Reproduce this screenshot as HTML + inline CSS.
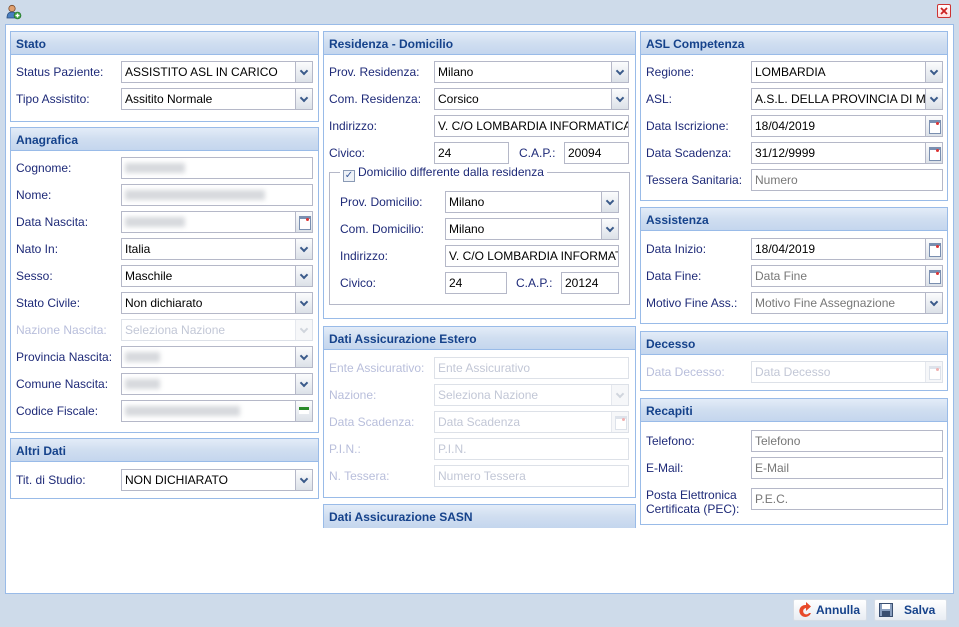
<!DOCTYPE html>
<html><head><meta charset="utf-8"><style>
*{box-sizing:border-box;margin:0;padding:0}
body{width:959px;height:627px;overflow:hidden;background:#cedbea;font-family:"Liberation Sans","DejaVu Sans",sans-serif;font-size:12px;position:relative}
.a{position:absolute}
.win{left:5px;top:24px;width:949px;height:570px;background:#fff;border:1px solid #99bbe8}
.p{position:absolute;border:1px solid #99bbe8;background:#fff}
.h{height:23px;background:linear-gradient(#e3ecf8,#d0def0 50%,#c4d6ee);border-bottom:1px solid #99bbe8;font-weight:bold;color:#15428b;padding-left:5px;line-height:24px}
.l{position:absolute;color:#1e2a78;white-space:nowrap;line-height:14px}
.f{position:absolute;height:22px;border:1px solid #b5b8c8;background:#fff;padding:0 3px;line-height:20px;white-space:nowrap;overflow:hidden;color:#000}
.ph{color:#777}
.dis{color:#c2c7d6;border-color:#dde1e8}
.dl{color:#b8bedb}
.t{position:absolute;right:0;top:0;width:17px;height:20px;background:linear-gradient(#fbfcfd,#dce1e8);border-left:1px solid #b5b8c8}
.t:after{content:"";position:absolute;left:5px;top:6px;width:4px;height:4px;border-right:2px solid #3a5a8a;border-bottom:2px solid #3a5a8a;transform:rotate(45deg)}
.t2{position:absolute;right:0;top:0;width:17px;height:20px;background:linear-gradient(#fbfcfd,#dce1e8);border-left:1px solid #b5b8c8}
.dis .t{border-left-color:#e5e8ee;background:#f6f7f9}
.dis .t:after{border-color:#d0d5dd}
.c{position:absolute;right:0;top:0;width:17px;height:20px;background:linear-gradient(#fbfcfd,#dce1e8);border-left:1px solid #b5b8c8}
.c:after{content:"";position:absolute;left:3px;top:4px;width:10px;height:10px;border:1px solid #7a8fb0;border-top:3px solid #7a8fb0;background:#fff}
.c:before{content:"";position:absolute;left:10px;top:6px;width:3px;height:3px;border-radius:2px;background:#d33;z-index:2}
.dis .c{border-left-color:#e5e8ee;background:#f6f7f9}
.dis .c:after{border-color:#dde2ea}
.dis .c:before{background:#f0b0b0}
.bl{display:inline-block;margin-top:5px;height:10px;background:#9aa0aa;filter:blur(2.5px);opacity:.4}
.btn{position:absolute;top:599px;height:22px;border:1px solid #d6dde6;border-radius:2px;background:linear-gradient(#fff,#e8edf3);font-weight:bold;color:#15428b;line-height:20px}
</style></head><body>
<svg class="a" style="left:6px;top:4px" width="16" height="16" viewBox="0 0 16 16"><circle cx="6" cy="4.5" r="3.2" fill="#e0a070" stroke="#7a4a2a" stroke-width=".8"/><path d="M1 14c0-4 2-6 5-6s5 2 5 6z" fill="#4a7fc0" stroke="#2a4f80" stroke-width=".8"/><circle cx="11.5" cy="11.5" r="3.5" fill="#3aa040" stroke="#1f6a25" stroke-width=".6"/><path d="M11.5 9.5v4M9.5 11.5h4" stroke="#fff" stroke-width="1.4"/></svg>
<div class="a" style="left:937px;top:4px;width:14px;height:14px;border:1px solid #c33;background:linear-gradient(#fff,#fdd);border-radius:2px"><svg width="12" height="12" viewBox="0 0 12 12"><path d="M3 3l6 6M9 3l-6 6" stroke="#c22" stroke-width="1.8"/></svg></div>
<div class="a win"></div>

<!-- col1 -->
<div class="p" style="left:10px;top:31px;width:309px;height:91px"><div class="h">Stato</div></div>
<div class="l" style="left:16px;top:65px">Status Paziente:</div><div class="f" style="left:121px;top:61px;width:192px">ASSISTITO ASL IN CARICO<div class="t"></div></div>
<div class="l" style="left:16px;top:92px">Tipo Assistito:</div><div class="f" style="left:121px;top:88px;width:192px">Assitito Normale<div class="t"></div></div>

<div class="p" style="left:10px;top:127px;width:309px;height:306px"><div class="h">Anagrafica</div></div>
<div class="l" style="left:16px;top:161px">Cognome:</div><div class="f" style="left:121px;top:157px;width:192px"><span class="bl" style="width:60px"></span></div>
<div class="l" style="left:16px;top:188px">Nome:</div><div class="f" style="left:121px;top:184px;width:192px"><span class="bl" style="width:140px"></span></div>
<div class="l" style="left:16px;top:215px">Data Nascita:</div><div class="f" style="left:121px;top:211px;width:192px"><span class="bl" style="width:60px"></span><div class="c"></div></div>
<div class="l" style="left:16px;top:242px">Nato In:</div><div class="f" style="left:121px;top:238px;width:192px">Italia<div class="t"></div></div>
<div class="l" style="left:16px;top:269px">Sesso:</div><div class="f" style="left:121px;top:265px;width:192px">Maschile<div class="t"></div></div>
<div class="l" style="left:16px;top:296px">Stato Civile:</div><div class="f" style="left:121px;top:292px;width:192px">Non dichiarato<div class="t"></div></div>
<div class="l dl" style="left:16px;top:323px">Nazione Nascita:</div><div class="f dis" style="left:121px;top:319px;width:192px">Seleziona Nazione<div class="t"></div></div>
<div class="l" style="left:16px;top:350px">Provincia Nascita:</div><div class="f" style="left:121px;top:346px;width:192px"><span class="bl" style="width:35px"></span><div class="t"></div></div>
<div class="l" style="left:16px;top:377px">Comune Nascita:</div><div class="f" style="left:121px;top:373px;width:192px"><span class="bl" style="width:35px"></span><div class="t"></div></div>
<div class="l" style="left:16px;top:404px">Codice Fiscale:</div><div class="f" style="left:121px;top:400px;width:192px"><span class="bl" style="width:115px"></span><div class="t2"><span class="a" style="left:3px;top:6px;width:10px;height:7px;background:#fff;border-top:3px solid #2a8a2a"></span></div></div>

<div class="p" style="left:10px;top:438px;width:309px;height:61px"><div class="h">Altri Dati</div></div>
<div class="l" style="left:16px;top:473px">Tit. di Studio:</div><div class="f" style="left:121px;top:469px;width:192px">NON DICHIARATO<div class="t"></div></div>

<!-- col2 -->
<div class="p" style="left:323px;top:31px;width:313px;height:288px"><div class="h">Residenza - Domicilio</div></div>
<div class="l" style="left:329px;top:65px">Prov. Residenza:</div><div class="f" style="left:434px;top:61px;width:195px">Milano<div class="t"></div></div>
<div class="l" style="left:329px;top:92px">Com. Residenza:</div><div class="f" style="left:434px;top:88px;width:195px">Corsico<div class="t"></div></div>
<div class="l" style="left:329px;top:119px">Indirizzo:</div><div class="f" style="left:434px;top:115px;width:195px">V. C/O LOMBARDIA INFORMATICA</div>
<div class="l" style="left:329px;top:146px">Civico:</div><div class="f" style="left:434px;top:142px;width:75px">24</div>
<div class="l" style="left:519px;top:146px">C.A.P.:</div><div class="f" style="left:564px;top:142px;width:65px">20094</div>
<div class="a" style="left:329px;top:172px;width:301px;height:133px;border:1px solid #b5b8c8"></div>
<div class="a" style="left:340px;top:165px;background:#fff;padding:0 3px;color:#1e2a78;line-height:14px"><span style="display:inline-block;width:12px;height:12px;border:1px solid #8a9ab5;background:#eef2f7;vertical-align:-2px;margin-right:3px;color:#3a5a9a;font-size:10px;line-height:10px;text-align:center">✓</span>Domicilio differente dalla residenza</div>
<div class="l" style="left:340px;top:195px">Prov. Domicilio:</div><div class="f" style="left:445px;top:191px;width:174px">Milano<div class="t"></div></div>
<div class="l" style="left:340px;top:222px">Com. Domicilio:</div><div class="f" style="left:445px;top:218px;width:174px">Milano<div class="t"></div></div>
<div class="l" style="left:340px;top:249px">Indirizzo:</div><div class="f" style="left:445px;top:245px;width:174px">V. C/O LOMBARDIA INFORMAT</div>
<div class="l" style="left:340px;top:276px">Civico:</div><div class="f" style="left:445px;top:272px;width:62px">24</div>
<div class="l" style="left:516px;top:276px">C.A.P.:</div><div class="f" style="left:561px;top:272px;width:58px">20124</div>

<div class="p" style="left:323px;top:326px;width:313px;height:172px"><div class="h">Dati Assicurazione Estero</div></div>
<div class="l dl" style="left:329px;top:361px">Ente Assicurativo:</div><div class="f dis" style="left:434px;top:357px;width:195px">Ente Assicurativo</div>
<div class="l dl" style="left:329px;top:388px">Nazione:</div><div class="f dis" style="left:434px;top:384px;width:195px">Seleziona Nazione<div class="t"></div></div>
<div class="l dl" style="left:329px;top:415px">Data Scadenza:</div><div class="f dis" style="left:434px;top:411px;width:195px">Data Scadenza<div class="c"></div></div>
<div class="l dl" style="left:329px;top:442px">P.I.N.:</div><div class="f dis" style="left:434px;top:438px;width:195px">P.I.N.</div>
<div class="l dl" style="left:329px;top:469px">N. Tessera:</div><div class="f dis" style="left:434px;top:465px;width:195px">Numero Tessera</div>

<div class="p" style="left:323px;top:504px;width:313px;height:24px"><div class="h" style="border-bottom:0">Dati Assicurazione SASN</div></div>

<!-- col3 -->
<div class="p" style="left:640px;top:31px;width:308px;height:170px"><div class="h">ASL Competenza</div></div>
<div class="l" style="left:646px;top:65px">Regione:</div><div class="f" style="left:751px;top:61px;width:192px">LOMBARDIA<div class="t"></div></div>
<div class="l" style="left:646px;top:92px">ASL:</div><div class="f" style="left:751px;top:88px;width:192px">A.S.L. DELLA PROVINCIA DI MI<div class="t"></div></div>
<div class="l" style="left:646px;top:119px">Data Iscrizione:</div><div class="f" style="left:751px;top:115px;width:192px">18/04/2019<div class="c"></div></div>
<div class="l" style="left:646px;top:146px">Data Scadenza:</div><div class="f" style="left:751px;top:142px;width:192px">31/12/9999<div class="c"></div></div>
<div class="l" style="left:646px;top:173px">Tessera Sanitaria:</div><div class="f ph" style="left:751px;top:169px;width:192px">Numero</div>

<div class="p" style="left:640px;top:207px;width:308px;height:117px"><div class="h">Assistenza</div></div>
<div class="l" style="left:646px;top:242px">Data Inizio:</div><div class="f" style="left:751px;top:238px;width:192px">18/04/2019<div class="c"></div></div>
<div class="l" style="left:646px;top:269px">Data Fine:</div><div class="f ph" style="left:751px;top:265px;width:192px">Data Fine<div class="c"></div></div>
<div class="l" style="left:646px;top:296px">Motivo Fine Ass.:</div><div class="f ph" style="left:751px;top:292px;width:192px">Motivo Fine Assegnazione<div class="t"></div></div>

<div class="p" style="left:640px;top:331px;width:308px;height:60px"><div class="h">Decesso</div></div>
<div class="l dl" style="left:646px;top:365px">Data Decesso:</div><div class="f dis" style="left:751px;top:361px;width:192px">Data Decesso<div class="c"></div></div>

<div class="p" style="left:640px;top:398px;width:308px;height:127px"><div class="h">Recapiti</div></div>
<div class="l" style="left:646px;top:434px">Telefono:</div><div class="f ph" style="left:751px;top:430px;width:192px">Telefono</div>
<div class="l" style="left:646px;top:461px">E-Mail:</div><div class="f ph" style="left:751px;top:457px;width:192px">E-Mail</div>
<div class="l" style="left:646px;top:488px">Posta Elettronica<br>Certificata (PEC):</div><div class="f ph" style="left:751px;top:488px;width:192px">P.E.C.</div>

<!-- buttons -->
<div class="btn" style="left:793px;width:74px;padding-left:22px"><svg class="a" style="left:4px;top:2px" width="16" height="16" viewBox="0 0 16 16"><path d="M13 11A6 6 0 1 1 8 3V0l5 4.5L8 9V6a3.2 3.2 0 1 0 3 5z" fill="#e84a2a"/></svg>Annulla</div>
<div class="btn" style="left:874px;width:73px;padding-left:29px"><svg class="a" style="left:4px;top:3px" width="14" height="14" viewBox="0 0 14 14"><rect x=".5" y=".5" width="13" height="13" fill="#8aa0c0" stroke="#3a4f70"/><rect x="3" y="1" width="8" height="5" fill="#fff"/><rect x="3" y="8" width="8" height="5" fill="#3a4f70"/></svg>Salva</div>
</body></html>
